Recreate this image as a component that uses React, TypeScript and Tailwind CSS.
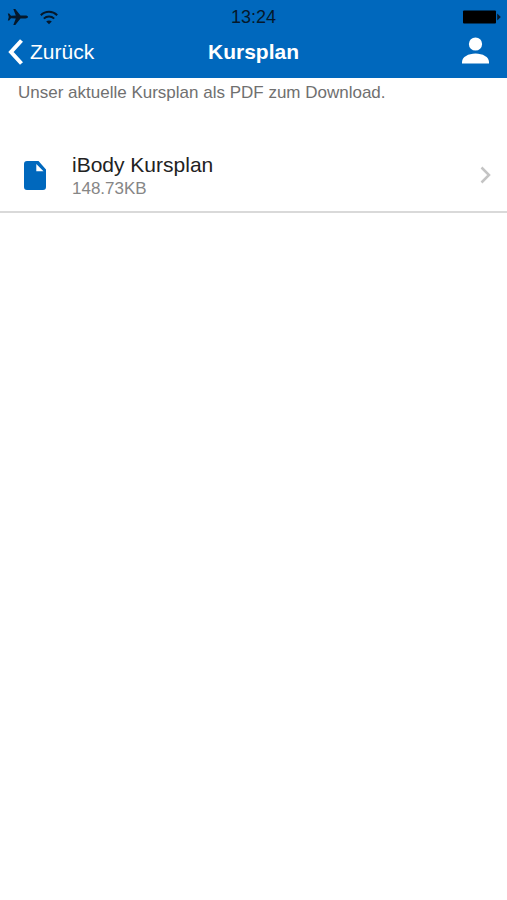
import React from "react";

const StatusBar: React.FC = () => {
  return (
    <div className="grid h-[34px] grid-cols-3 items-center px-[6px] text-[#05182b]">
      <div className="flex items-center gap-3">
        <svg
          className="h-4 w-[22px]"
          viewBox="0 0 22 16"
          fill="currentColor"
          aria-label="Flugmodus"
        >
          <path d="M22 8c0-.8-1.200-1.400-2.500-1.400h-5L9.300 0H7.300l2.500 6.500-4.800.2L3.200 4.500H1.800L2.800 8l-1 3.500h1.400L5 9.300l4.800.2L7.300 16h2l5.200-6.600h5C20.800 9.400 22 8.800 22 8Z" />
        </svg>
        <svg
          className="h-[15px] w-[18px]"
          viewBox="0 0 18 15"
          fill="none"
          stroke="currentColor"
          strokeWidth="2"
          aria-label="WLAN"
        >
          <path d="M.8 5.200c4.600-4.600 11.800-4.600 16.400 0" />
          <path d="M3.800 8.600c3-2.900 7.400-2.900 10.400 0" />
          <path
            d="M9 14.300 6.200 11.500c1.600-1.500 4-1.500 5.600 0Z"
            fill="currentColor"
            stroke="none"
          />
        </svg>
      </div>
      <span className="text-center text-[18px] leading-5">13:24</span>
      <svg
        className="h-[14px] w-10 justify-self-end"
        viewBox="0 0 40 14"
        aria-label="Akku voll"
      >
        <rect x="2" y="0.500" width="33" height="13" rx="1" fill="#000" />
        <path d="M36.200 3.500 39.800 7l-3.600 3.500Z" fill="#05182b" />
      </svg>
    </div>
  );
};

const NavBar: React.FC = () => {
  return (
    <nav className="grid h-[44px] grid-cols-3 items-center px-2 pb-2 text-white">
      <button type="button" className="flex items-center gap-[7px] text-[21px] leading-6">
        <svg
          className="h-[26px] w-[15px]"
          viewBox="0 0 15 26"
          fill="none"
          stroke="currentColor"
          strokeWidth="4"
          aria-hidden="true"
        >
          <path d="M13.500 1.500 3 13l10.500 11.500" />
        </svg>
        Zurück
      </button>
      <h1 className="text-center text-[21px] font-bold leading-6">Kursplan</h1>
      <button type="button" className="justify-self-end pb-[3px] pr-[10px]" aria-label="Profil">
        <svg className="h-[27px] w-[27px]" viewBox="0 0 27 27" fill="currentColor">
          <circle cx="13.500" cy="7" r="6.600" />
          <path d="M0 26.500v-1.500c0-5 6.300-8.500 13.500-8.500S27 20 27 25v1.500Z" />
        </svg>
      </button>
    </nav>
  );
};

type DownloadProps = {
  title: string;
  size: string;
};

const DownloadRow: React.FC<DownloadProps> = ({ title, size }) => {
  return (
    <li className="border-b-2 border-[#d9d9d9]">
      <a href="#download" className="flex items-center py-3 pl-6 pr-4">
        <svg
          className="h-[29px] w-[22px] shrink-0"
          viewBox="0 0 22 29"
          fill="#0068bd"
          aria-hidden="true"
        >
          <path
            fillRule="evenodd"
            d="M3 0h11.500L22 8.500V26a3 3 0 0 1-3 3H3a3 3 0 0 1-3-3V3a3 3 0 0 1 3-3Zm9.300 3v7.300h7.200Z"
          />
        </svg>
        <span className="ml-[26px] flex grow flex-col">
          <span className="text-[21px] leading-7 text-[#222]">{title}</span>
          <span className="text-[17px] leading-5 text-[#868686]">{size}</span>
        </span>
        <svg
          className="h-[18px] w-[11px] shrink-0"
          viewBox="0 0 11 18"
          fill="none"
          stroke="#c4c4c4"
          strokeWidth="2.500"
          aria-hidden="true"
        >
          <path d="M1.500 1.500 9 9l-7.500 7.500" />
        </svg>
      </a>
    </li>
  );
};

export default function App() {
  return (
    <div className="min-h-screen bg-white font-['Liberation_Sans',Arial,sans-serif]">
      <header className="bg-[#0068bd]">
        <StatusBar />
        <NavBar />
      </header>
      <main>
        <p className="px-[18px] pt-[5px] text-[17px] leading-5 text-[#707070]">
          Unser aktuelle Kursplan als PDF zum Download.
        </p>
        <ul className="mt-9">
          <DownloadRow title="iBody Kursplan" size="148.73KB" />
        </ul>
      </main>
    </div>
  );
}
